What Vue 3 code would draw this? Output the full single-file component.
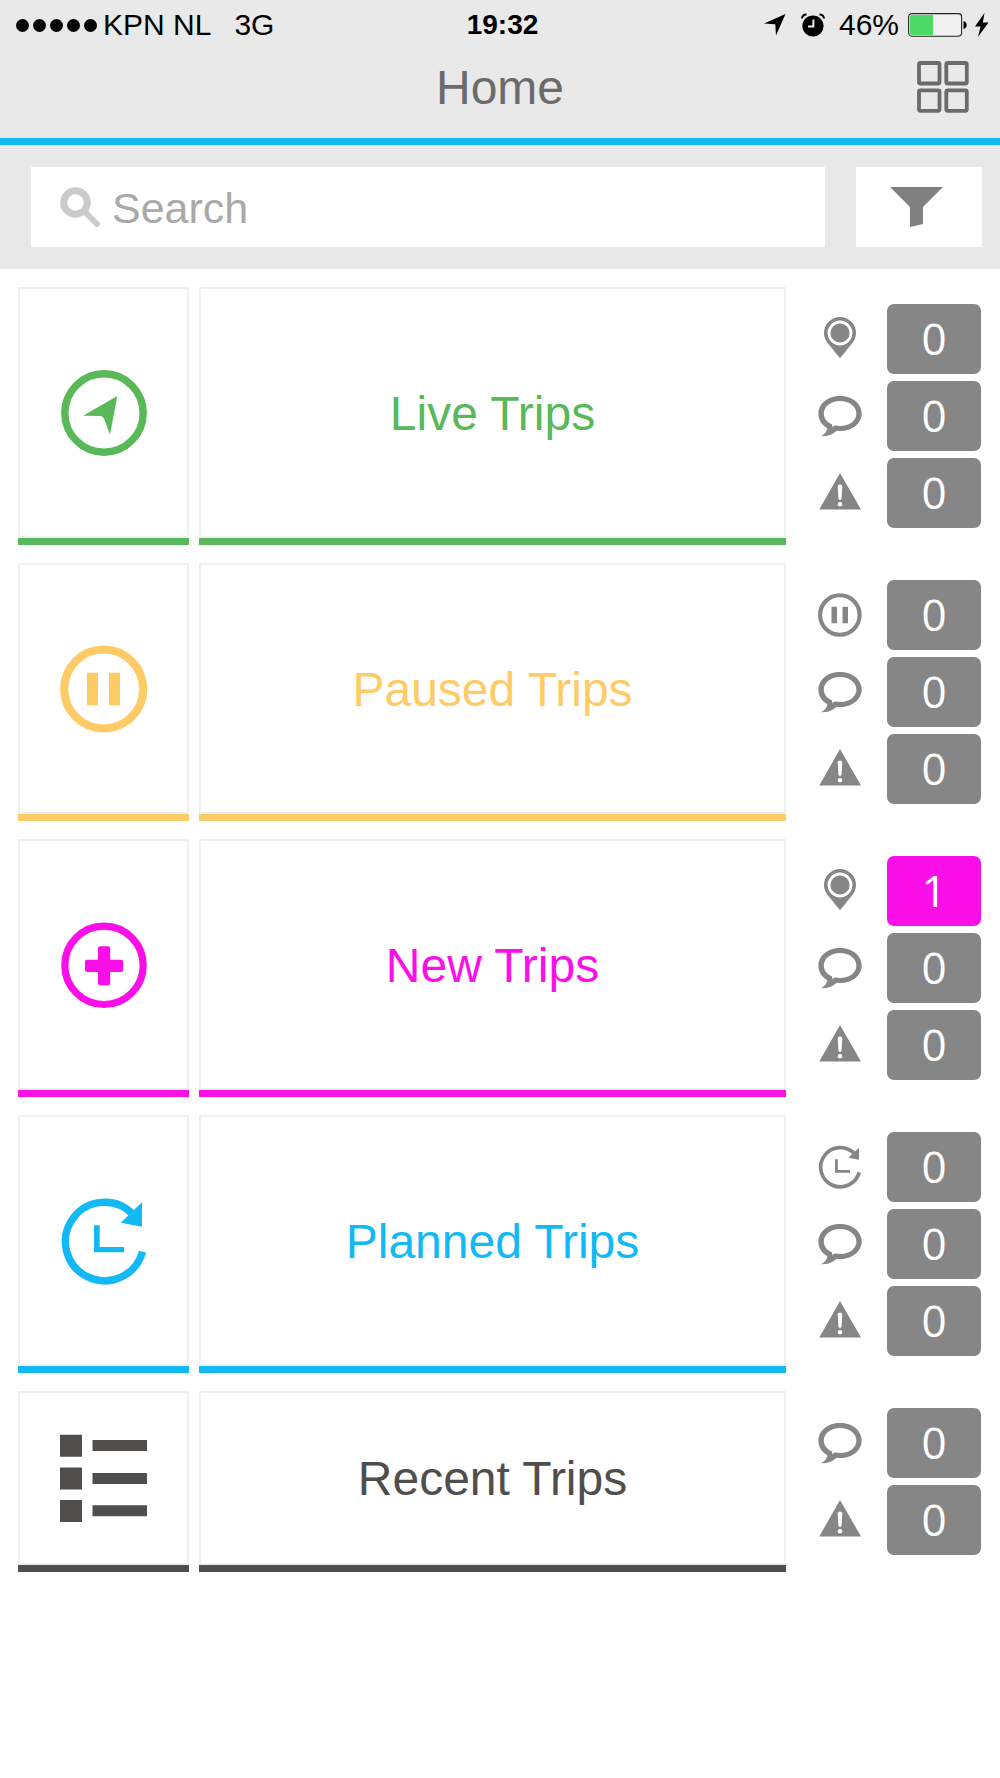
<script setup>
import { ref } from 'vue'

const query = ref('')

const rows = [
  { id: 'live', label: 'Live Trips', stats: [['pin', 0], ['chat', 0], ['alert', 0]] },
  { id: 'paused', label: 'Paused Trips', stats: [['paused', 0], ['chat', 0], ['alert', 0]] },
  { id: 'new', label: 'New Trips', stats: [['pin', 1], ['chat', 0], ['alert', 0]] },
  { id: 'planned', label: 'Planned Trips', stats: [['planned', 0], ['chat', 0], ['alert', 0]] },
  { id: 'recent', label: 'Recent Trips', stats: [['chat', 0], ['alert', 0]] },
]
</script>

<template>
  <div class="app">
    <svg class="defs" aria-hidden="true">
      <symbol id="live" viewBox="0 0 88 88">
        <circle cx="44" cy="44" r="39.2" fill="none" stroke="currentColor" stroke-width="7.4" />
        <path d="M57.3 27 50 65.7 44.4 50.5Q43.2 47.2 40 47L23 46.7Z" fill="currentColor" />
      </symbol>
      <symbol id="paused" viewBox="0 0 88 88">
        <circle cx="43.7" cy="44" r="39.5" fill="none" stroke="currentColor" stroke-width="8.2" />
        <path d="M27 27.7H38V60.3H27ZM49 27.7H60V60.3H49Z" fill="currentColor" />
      </symbol>
      <symbol id="new" viewBox="0 0 88 88">
        <circle cx="44" cy="44.3" r="39.2" fill="none" stroke="currentColor" stroke-width="7.2" />
        <rect x="25" y="38.7" width="38.2" height="12.2" rx="1.8" fill="currentColor" />
        <rect x="38" y="25.3" width="12.2" height="39" rx="1.8" fill="currentColor" />
      </symbol>
      <symbol id="planned" viewBox="0 0 88 88">
        <path d="M73 17.5A39.2 39.2 0 1 0 82.5 54.6" fill="none" stroke="currentColor" stroke-width="7.4" />
        <path d="M82 5.3V29.7L60.7 25.7Z" fill="currentColor" />
        <path d="M34 28.3H39.7V50H64V55.3H34Z" fill="currentColor" />
      </symbol>
      <symbol id="recent" viewBox="0 0 88 88">
        <path
          d="M0 .7H22V22.7H0ZM0 33.4H22V55.4H0ZM0 66H22V88H0ZM32.5 6H87V17H32.5ZM32.5 39H87V50H32.5ZM32.5 71.3H87V82.3H32.5Z"
          fill="currentColor"
        />
      </symbol>
      <symbol id="pin" viewBox="0 0 44 44">
        <path d="M22 0A16 16 0 0 0 6 16C6 20 7.4 23 9.6 25.9L22 41.3 34.4 25.9C36.6 23 38 20 38 16A16 16 0 0 0 22 0Z" fill="currentColor" />
        <circle cx="22" cy="16" r="11" fill="none" stroke="#fff" stroke-width="2.8" />
      </symbol>
      <symbol id="chat" viewBox="0 0 44 44">
        <path
          fill-rule="evenodd"
          fill="currentColor"
          d="M22 2C34.5 2 43.7 9.8 43.7 19.5S34.5 37 22 37C20.8 37 19.8 36.9 18.7 36.8C14.5 40.6 9.5 42.4 2.8 42.3C6.6 40.6 8.8 37.6 9.4 34.2C3.8 31 .4 25.9 .4 19.7C.4 9.8 9.5 2 22 2ZM22 7C12.6 7 5.8 12.6 5.8 19.5C5.8 24.4 9 28.2 14.1 30.5C14.2 31.4 14.3 32.2 14.1 33.4C15.6 31.9 16.8 31.3 18.2 31.6C19.4 31.9 20.6 32 22 32C31.6 32 38.4 26.5 38.4 19.5S31.4 7 22 7Z"
        />
      </symbol>
      <symbol id="alert" viewBox="0 0 44 44">
        <path d="M22 2 43 38.4H1.3Z" fill="currentColor" />
        <path d="M19.7 15.6Q19.7 13.6 22 13.6T24.3 15.6L23.5 27.4Q23.3 29 22 29T20.5 27.4Z" fill="#fff" />
        <circle cx="22" cy="33.3" r="2.2" fill="#fff" />
      </symbol>
    </svg>

    <header class="top">
      <div class="status">
        <div class="status-left">
          <span class="signal"><i v-for="n in 5" :key="n"></i></span>
          <span>KPN NL</span>
          <span class="network">3G</span>
        </div>
        <strong class="time">19:32</strong>
        <div class="status-right">
          <svg class="locate" width="22" height="22" viewBox="0 0 22 22"><path d="M21.5 0 12 21.5 11.3 10.2 0 9.6Z" /></svg>
          <svg class="alarm" width="24" height="24" viewBox="0 0 24 24">
            <circle cx="12" cy="13" r="10.6" />
            <path d="M1 5.5Q1.5 1.5 5.5 1.6M23 5.5Q22.5 1.5 18.5 1.6" fill="none" stroke="#000" stroke-width="2" />
            <path d="M12.4 6.5V13.4H7" fill="none" stroke="#e9e9e9" stroke-width="2" />
          </svg>
          <span class="percent">46%</span>
          <svg class="battery" width="60" height="24" viewBox="0 0 60 24">
            <rect x=".6" y=".6" width="53" height="22.6" rx="3.5" fill="#f1f1f1" stroke="#222" stroke-width="1.1" />
            <path d="M4 2H25V22H4Q2 22 2 20V4Q2 2 4 2Z" fill="#4cd964" />
            <path d="M55.5 8Q58.7 9 58.7 12T55.5 16Z" />
          </svg>
          <svg class="bolt" width="14" height="24" viewBox="0 0 14 24"><path d="M9.5 0 0 13.5H5.5L3 24 13.5 9.5H7.8Z" /></svg>
        </div>
      </div>
      <div class="titlebar">
        <h1>Home</h1>
        <button class="grid-button" type="button" aria-label="Apps">
          <svg width="52" height="52" viewBox="0 0 52 52" fill="none" stroke="#6b6b6b" stroke-width="3.8">
            <rect x="2" y="2" width="20.5" height="20.5" rx="1.5" />
            <rect x="29.3" y="2" width="20.5" height="20.5" rx="1.5" />
            <rect x="2" y="29.3" width="20.5" height="20.5" rx="1.5" />
            <rect x="29.3" y="29.3" width="20.5" height="20.5" rx="1.5" />
          </svg>
        </button>
      </div>
    </header>

    <form class="search" role="search" @submit.prevent>
      <label class="field">
        <svg width="40" height="40" viewBox="0 0 40 40" fill="none" stroke="#cbcbcb" aria-hidden="true">
          <circle cx="15.5" cy="15.5" r="11.8" stroke-width="7" />
          <path d="M25 25 37 37" stroke-width="6" stroke-linecap="round" />
        </svg>
        <input v-model="query" type="text" placeholder="Search" aria-label="Search" />
      </label>
      <button class="filter" type="button" aria-label="Filter">
        <svg width="54" height="40" viewBox="0 0 54 40"><path d="M0 0H53L33 20V37L20 40V20Z" fill="#808080" /></svg>
      </button>
    </form>

    <main class="rows">
      <section v-for="row in rows" :key="row.id" class="row" :class="row.id">
        <a class="trip" href="#">
          <span class="tile tile-icon">
            <svg width="88" height="88" aria-hidden="true"><use :href="'#' + row.id" /></svg>
          </span>
          <span class="tile tile-label">{{ row.label }}</span>
        </a>
        <ul class="stats">
          <li v-for="[icon, count] in row.stats" :key="icon">
            <svg width="44" height="44" aria-hidden="true"><use :href="'#' + icon" /></svg>
            <span class="badge" :class="{ active: count > 0 }">{{ count }}</span>
          </li>
        </ul>
      </section>
    </main>
  </div>
</template>

<style>
body {
  margin: 0;
  background: #fff;
}
</style>

<style scoped>
.app {
  font-family: 'Liberation Sans', Arial, sans-serif;
  color: #000;
}

.app * {
  box-sizing: border-box;
}

svg {
  display: block;
  flex: none;
}

.defs {
  position: absolute;
  width: 0;
  height: 0;
}

button {
  display: flex;
  align-items: center;
  justify-content: center;
  padding: 0;
  border: 0;
  background: none;
}

.top {
  background: #e9e9e9;
  border-bottom: 7px solid #12b9f1;
}

.status {
  display: grid;
  grid-template-columns: 1fr auto 1fr;
  align-items: center;
  height: 50px;
  padding: 0 11px 0 16px;
  font-size: 30px;
  line-height: 50px;
}

.status-left,
.status-right {
  display: flex;
  align-items: center;
}

.status-right {
  justify-content: flex-end;
}

.signal {
  display: flex;
  gap: 4px;
  margin-right: 6px;
}

.signal i {
  width: 13px;
  height: 13px;
  border-radius: 50%;
  background: #000;
}

.network {
  margin-left: 23px;
}

.time {
  font-size: 28px;
}

.alarm {
  margin: 0 14px 0 15px;
}

.battery {
  margin: 0 7px 0 9px;
}

.titlebar {
  display: grid;
  grid-template-columns: 1fr auto 1fr;
  align-items: center;
  height: 88px;
  padding: 0 31px 14px;
}

h1 {
  grid-column: 2;
  margin: 0;
  padding-top: 2px;
  font-size: 48px;
  font-weight: 400;
  line-height: 56px;
  color: #6b6b6b;
}

.grid-button {
  justify-self: end;
}

.search {
  display: flex;
  align-items: center;
  gap: 31px;
  padding: 22px 18px 22px 31px;
  background: #e8e8e8;
}

.field {
  display: flex;
  flex: 1;
  align-items: center;
  gap: 12px;
  height: 80px;
  padding: 0 29px;
  background: #fff;
}

input {
  flex: 1;
  min-width: 0;
  height: 60px;
  padding: 2px 0 0;
  border: 0;
  outline: 0;
  background: none;
  font: 43px 'Liberation Sans', Arial, sans-serif;
  color: #6b6b6b;
}

input::placeholder {
  color: #a9a9a9;
  opacity: 1;
}

.filter {
  width: 126px;
  height: 80px;
  padding-right: 4px;
  background: #fff;
}

.rows {
  display: flex;
  flex-direction: column;
  gap: 18px;
  padding: 18px 19px 18px 18px;
}

.row {
  display: flex;
  min-height: 258px;
}

.trip {
  display: flex;
  flex: 1;
  gap: 10px;
  color: inherit;
  text-decoration: none;
}

.tile {
  display: flex;
  align-items: center;
  justify-content: center;
  border-bottom: 7px solid currentColor;
  box-shadow: inset 0 0 0 2px #f0f0f0;
}

.tile-icon {
  width: 171px;
}

.tile-label {
  flex: 1;
  padding-top: 2px;
  font-size: 48px;
  line-height: 56px;
}

.stats {
  display: flex;
  flex-direction: column;
  justify-content: center;
  gap: 7px;
  margin: 0;
  padding: 0 0 0 32px;
  list-style: none;
  color: #868686;
}

.stats li {
  display: flex;
  align-items: center;
  gap: 25px;
}

.badge {
  width: 94px;
  height: 70px;
  border-radius: 7px;
  background: #868686;
  color: #fff;
  font-family: 'Open Sans', 'Noto Sans', sans-serif;
  font-size: 44px;
  line-height: 68px;
  text-align: center;
}

.badge.active {
  background: #fa0fe8;
}

.live {
  color: #59b959;
}

.paused {
  color: #ffcb66;
}

.new {
  color: #fa0fe8;
}

.planned {
  color: #12b9f5;
}

.recent {
  min-height: 181px;
  color: #4f4e4c;
}
</style>
